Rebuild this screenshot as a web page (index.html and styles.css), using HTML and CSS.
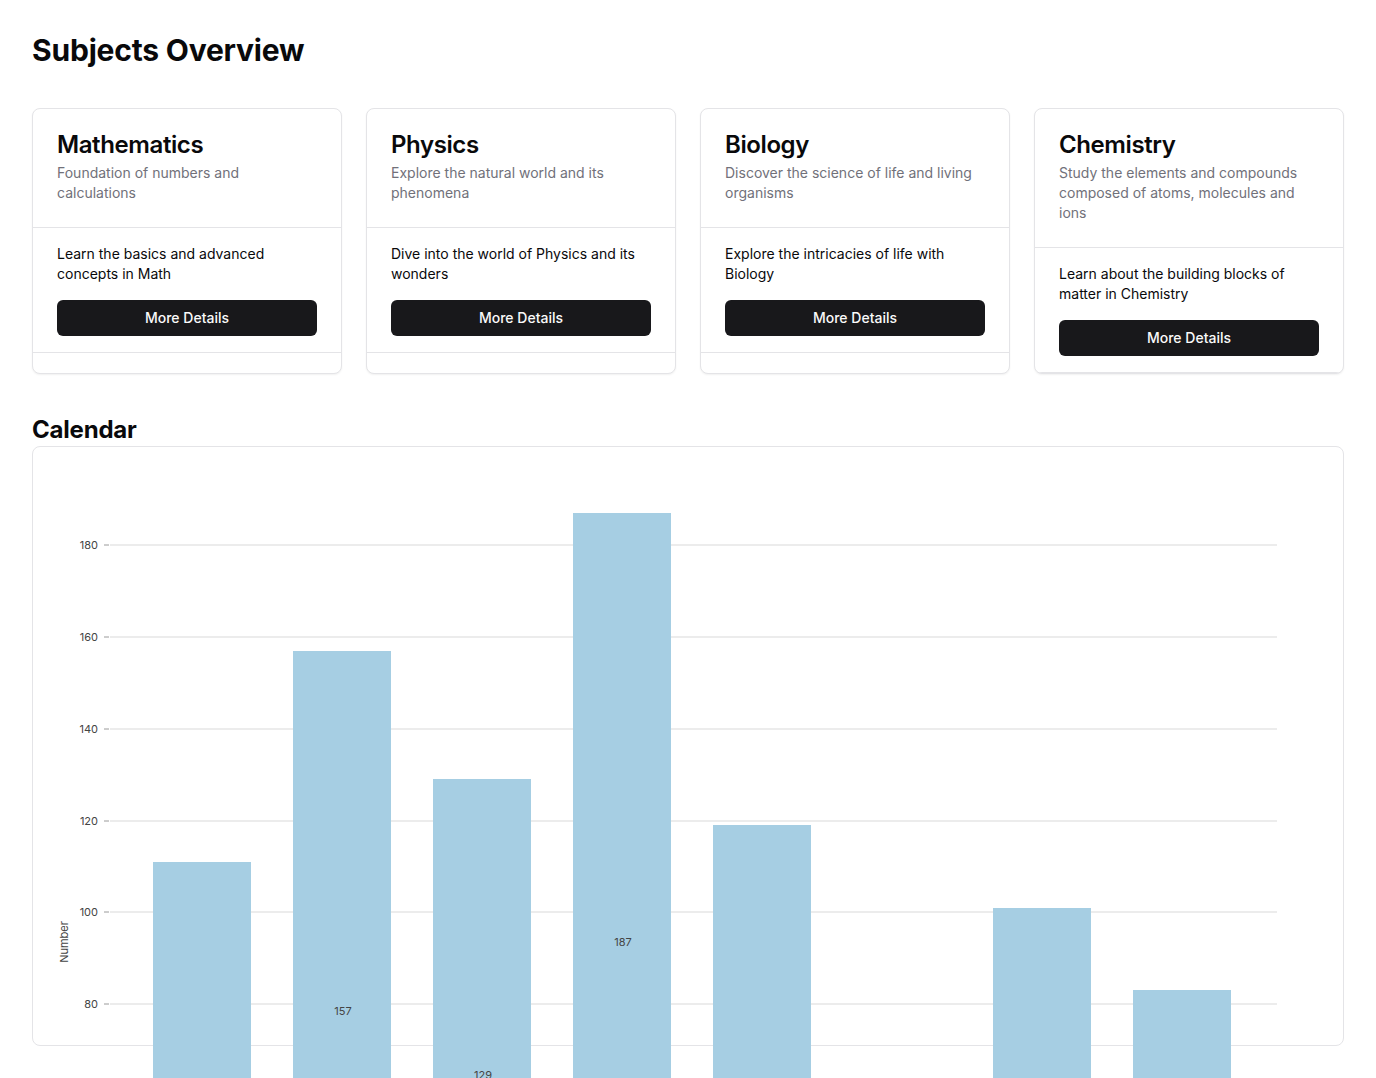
FILE: index.html
```html
<!DOCTYPE html>
<html lang="en">
<head>
<meta charset="utf-8">
<title>Subjects Overview</title>
<link rel="stylesheet" href="styles.css">
</head>
<body>
<main class="page">
  <h1 class="page-title">Subjects Overview</h1>
  <section class="cards">
    <article class="card">
      <header class="card-header">
        <h3 class="card-title">Mathematics</h3>
        <p class="card-desc">Foundation of numbers and calculations</p>
      </header>
      <div class="card-content">
        <p class="card-text">Learn the basics and advanced concepts in Math</p>
        <button class="btn">More Details</button>
      </div>
      <footer class="card-footer"></footer>
    </article>
    <article class="card">
      <header class="card-header">
        <h3 class="card-title">Physics</h3>
        <p class="card-desc">Explore the natural world and its phenomena</p>
      </header>
      <div class="card-content">
        <p class="card-text">Dive into the world of Physics and its wonders</p>
        <button class="btn">More Details</button>
      </div>
      <footer class="card-footer"></footer>
    </article>
    <article class="card">
      <header class="card-header">
        <h3 class="card-title">Biology</h3>
        <p class="card-desc">Discover the science of life and living organisms</p>
      </header>
      <div class="card-content">
        <p class="card-text">Explore the intricacies of life with Biology</p>
        <button class="btn">More Details</button>
      </div>
      <footer class="card-footer"></footer>
    </article>
    <article class="card">
      <header class="card-header">
        <h3 class="card-title">Chemistry</h3>
        <p class="card-desc">Study the elements and compounds composed of atoms, molecules and ions</p>
      </header>
      <div class="card-content">
        <p class="card-text">Learn about the building blocks of matter in Chemistry</p>
        <button class="btn">More Details</button>
      </div>
      <footer class="card-footer"></footer>
    </article>
  </section>

  <h2 class="section-title">Calendar</h2>
  <section class="chart-card">
    <svg class="chart" width="1310" height="598" viewBox="0 0 1310 598">
      <g transform="translate(-33,-447)">
        <g class="grid">
          <line x1="110" x2="1277" y1="545" y2="545"/>
          <line x1="110" x2="1277" y1="637" y2="637"/>
          <line x1="110" x2="1277" y1="729" y2="729"/>
          <line x1="110" x2="1277" y1="821" y2="821"/>
          <line x1="110" x2="1277" y1="912" y2="912"/>
          <line x1="110" x2="1277" y1="1004" y2="1004"/>
        </g>
        <g class="ticks">
          <line x1="104" x2="109" y1="545" y2="545"/>
          <line x1="104" x2="109" y1="637" y2="637"/>
          <line x1="104" x2="109" y1="729" y2="729"/>
          <line x1="104" x2="109" y1="821" y2="821"/>
          <line x1="104" x2="109" y1="912" y2="912"/>
          <line x1="104" x2="109" y1="1004" y2="1004"/>
        </g>
        <g class="tick-labels">
          <text x="98" y="549">180</text>
          <text x="98" y="641">160</text>
          <text x="98" y="733">140</text>
          <text x="98" y="825">120</text>
          <text x="98" y="916">100</text>
          <text x="98" y="1008">80</text>
        </g>
        <text class="axis-title" transform="translate(68,942) rotate(-90)">Number</text>
        <g class="bars">
          <rect x="153" y="862" width="98" height="509"/>
          <rect x="293" y="651" width="98" height="720"/>
          <rect x="433" y="779" width="98" height="592"/>
          <rect x="573" y="513" width="98" height="858"/>
          <rect x="713" y="825" width="98" height="546"/>
          <rect x="993" y="908" width="98" height="463"/>
          <rect x="1133" y="990" width="98" height="381"/>
        </g>
        <g class="value-labels">
          <text x="202" y="1120">111</text>
          <text x="343" y="1015">157</text>
          <text x="483" y="1079">129</text>
          <text x="623" y="946">187</text>
          <text x="763" y="1102">119</text>
        </g>
      </g>
    </svg>
  </section>
</main>
</body>
</html>
```

FILE: styles.css
```css
* {
  box-sizing: border-box;
}

html, body {
  margin: 0;
  padding: 0;
  background: #ffffff;
}

body {
  font-family: Inter, "Noto Sans", "Liberation Sans", sans-serif;
  color: #09090b;
}

.page {
  padding: 32px 32px 48px 32px;
}

.page-title {
  margin: 0 0 40px 0;
  font-size: 30px;
  line-height: 36px;
  font-weight: 700;
  letter-spacing: -0.2px;
}

.cards {
  display: grid;
  grid-template-columns: repeat(4, 1fr);
  gap: 24px;
}

.card {
  height: 266px;
  overflow: hidden;
  border: 1px solid #e4e4e7;
  border-radius: 8px;
  background: #ffffff;
  box-shadow: 0 1px 2px rgba(0, 0, 0, 0.06);
  display: flex;
  flex-direction: column;
}

.card-header {
  padding: 24px 24px 24px 24px;
  display: flex;
  flex-direction: column;
  gap: 6px;
  border-bottom: 1px solid #e4e4e7;
}

.card-title {
  margin: 0;
  font-size: 24px;
  line-height: 24px;
  font-weight: 600;
  letter-spacing: -0.4px;
}

.card-desc {
  margin: 0;
  font-size: 14px;
  line-height: 20px;
  color: #71717a;
}

.card-content {
  padding: 16px 24px 16px 24px;
  display: flex;
  flex-direction: column;
  gap: 16px;
  border-bottom: 1px solid #e4e4e7;
}

.card-text {
  margin: 0;
  font-size: 14px;
  line-height: 20px;
  color: #09090b;
}

.btn {
  height: 36px;
  border: none;
  border-radius: 6px;
  background: #18181b;
  color: #fafafa;
  font-family: inherit;
  font-size: 14px;
  line-height: 20px;
  font-weight: 500;
  padding: 0 16px 1px 16px;
  cursor: pointer;
}

.card-footer {
  height: 20px;
  flex-shrink: 0;
}

.section-title {
  margin: 40px 0 0 0;
  font-size: 24px;
  line-height: 32px;
  font-weight: 700;
  letter-spacing: -0.2px;
}

.chart-card {
  height: 600px;
  border: 1px solid #e4e4e7;
  border-radius: 8px;
  background: #ffffff;
}

.chart {
  display: block;
  overflow: visible;
}

.grid line {
  stroke: #e6e6e6;
  stroke-width: 1.5;
}

.ticks line {
  stroke: #9a9a9a;
  stroke-width: 1;
}

.tick-labels text {
  font-family: Inter, "Liberation Sans", sans-serif;
  font-size: 11px;
  fill: #444444;
  text-anchor: end;
}

.axis-title {
  font-family: Inter, "Liberation Sans", sans-serif;
  font-size: 11px;
  fill: #444444;
  text-anchor: middle;
}

.bars rect {
  fill: #a6cee3;
}

.value-labels text {
  font-family: Inter, "Liberation Sans", sans-serif;
  font-size: 11px;
  fill: #444444;
  text-anchor: middle;
}
```
